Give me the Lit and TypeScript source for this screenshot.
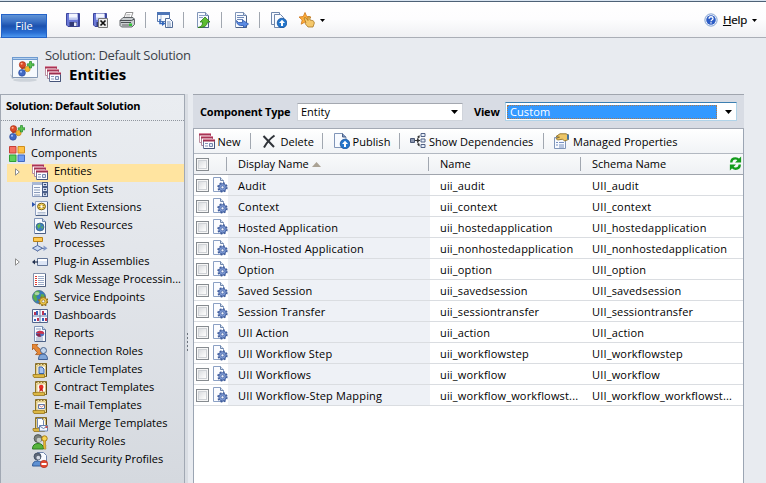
import { LitElement, html, css, svg, nothing } from "lit";
import { customElement, property } from "lit/decorators.js";
import { classMap } from "lit/directives/class-map.js";

const page = svg`<path d="M2.5.5h8l3 3v12h-11z" fill="#f7faff" stroke="#8095b8"/><path d="M10.500.5v3h3" fill="#c9d6ea" stroke="#6f87ad"/><path d="M13.500 4v11.500H3" stroke="#4d6186"/>`;
const stack = svg`
  <path d="M.5.5h11v9H.5z" fill="#fff" stroke="#bd8fa0"/><path d="M0 0h12v1H0z" fill="#d9899f"/><path d="M0 1h12v1.500H0z" fill="#a63555"/>
  <path d="M2.500 3.500h11v9h-11z" fill="#fff" stroke="#b08a9f"/><path d="M2 3h12v1H2z" fill="#d9899f"/><path d="M2 4h12v1.500H2z" fill="#a63555"/>
  <path d="M4.500 6.500h11v9h-11z" fill="#fbfcff" stroke="#6a7799"/><path d="M4 6h12v1H4z" fill="#d9899f"/><path d="M4 7h12v1.500H4z" fill="#9c2f4e"/><path d="M15.500 9v6.500H5" stroke="#465479"/>
  <path d="M6 10h3v1H6zM6 12.500h3v1H6z" fill="#8897b8"/><path d="M10.500 10.500h3v3h-3z" fill="#dfe6f4" stroke="#7587ad"/>`;
const people = svg`
  <path d="M5 5l4 5M8 10l4-4" stroke="#777" stroke-width="1.500"/>
  <circle cx="9.500" cy="8" r="2.700" fill="#f5b62c" stroke="#b37a10" stroke-width=".6"/>
  <circle cx="4.500" cy="3.800" r="3.200" fill="#dc4a25" stroke="#a32c12" stroke-width=".6"/><circle cx="3.600" cy="2.800" r="1" fill="#ffb294"/><path d="M2.500 6.500h4L5.500 8h-2z" fill="#b13a1c"/>
  <circle cx="4" cy="11.800" r="3.400" fill="#4169c4" stroke="#234190" stroke-width=".6"/><circle cx="3" cy="10.800" r="1" fill="#a9c5ff"/>
  <path d="M11.500.5h2v2.300H16v2h-2.500V7h-2V4.800H9.300v-2h2.200z" fill="#5cc54f" stroke="#23862b" stroke-width=".7"/>`;
const floppy = svg`
  <path d="M1.500 1.500h13v13H3L1.500 13z" fill="#6a78d6" stroke="#3c469f"/><path d="M13 2h1v12h-1z" fill="#39449b"/><path d="M4 1.500h8.500v6H4z" fill="#f3f6ff"/>
  <path d="M4 5.500h8.500v2H4z" fill="#c3cdf0"/><path d="M4.500 10h7.500v4.500H4.500z" fill="#323a74"/><path d="M9 10.500h2.500v3.500H9z" fill="#e5eaf8"/>`;
const template = svg`
  <path d="M3.500 1.500h11v13h-11z" fill="#f0dfa2" stroke="#8d7328"/><path d="M14.500 2v12.500" stroke="#5f4c17"/>
  <path d="M4 1h1.500v2H4zM7 1h1.500v2H7zM10 1h1.500v2H10zM13 1h1.500v2H13z" fill="#8a7232"/>
  <path d="M1 12.500h11.500v3H2q-1.500-1.500-1-3z" fill="#dcb743" stroke="#957419" stroke-width=".8"/><path d="M5 4h8.500v8H5z" fill="#fffdf2" stroke="#c7a956" stroke-width=".6"/>`;
const globe = svg`
  <circle cx="7" cy="7" r="6.500" fill="#377bbd" stroke="#416181" stroke-width=".7"/>
  <path d="M3 2q4-2.500 5 .5L6 5 4 6.500 5.500 9 4 12Q.5 9 1 6zM9 4l3 .5.5 4L10 11 8.500 8z" fill="#5aad4c"/><ellipse cx="5" cy="3.500" rx="2.500" ry="1.500" fill="#fff" opacity=".5"/>`;
const gearAt = (x: number, y: number, fill: string, edge: string) => svg`
  <g transform="translate(${x} ${y})"><circle r="4.300" fill="none" stroke=${edge} stroke-width="1.800" stroke-dasharray="1.800 1.577"/>
  <circle r="3.700" fill=${fill} stroke=${edge} stroke-width=".8"/><circle r="1.500" fill="#eef3fc" stroke=${edge} stroke-width=".7"/></g>`;
const upBadge = svg`<circle cx="11" cy="11" r="4.800" fill="#2376cc" stroke="#17509b" stroke-width=".8"/><path d="M11 7.800l3 3.200h-2v3h-2v-3H8z" fill="#fff"/>`;

const icons: Record<string, unknown> = {
  stack, people, save: floppy,
  saveClose: svg`${floppy}<path d="M6.500 6.500h9v9h-9z" fill="#ececec" stroke="#777"/><path d="M8.500 8.500l5 5m0-5l-5 5" stroke="#111" stroke-width="1.700"/>`,
  print: svg`<path d="M5 6l2-5.500h7L12 6z" fill="#fff" stroke="#777" stroke-width=".8"/><path d="M7.500 2.500h4M7 4h4" stroke="#aaa" stroke-width=".7"/>
    <path d="M1 8.500L4 5.500h10l1.500 2v5L13 15H2.500L1 13.500z" fill="#c9cdd0" stroke="#55595e" stroke-width=".9"/><path d="M1 8.500h11.500l3-1.500M2 10.500h10" stroke="#4b4f54" fill="none"/><path d="M3 13h7" stroke="#666"/><path d="M10 11.500h3v2.500h-3z" fill="#30c336"/>`,
  copySheet: svg`<path d="M.5.5h12v9H.5z" fill="#f8fbff" stroke="#5878ac"/><path d="M0 0h13v3H0z" fill="#4d75b7"/><path d="M4 3v6" stroke="#a9bcd9"/>
    <path d="M8.500 6.500h4l3 3v6h-7z" fill="#f5f9ff" stroke="#516b97"/><path d="M10 10h3.500M10 12h4M10 14h4" stroke="#7991b8"/><path d="M3 7v4.500h2.500" fill="none" stroke="#3267bd" stroke-width="1.500"/><path d="M5 9l3.500 2.500L5 14z" fill="#3267bd"/>`,
  exportUp: svg`${page}<path d="M4 3.500h6M4 5.500h4" stroke="#8da1c3"/><path d="M3 15.500q5-1 4.500-5.500H5l5-5 5 5h-2.500Q12 16 3 15.500z" fill="#5dbd31" stroke="#2b7b19" stroke-width=".8"/>`,
  exportRight: svg`${page}<path d="M4 3.500h6M4 5.500h7M4 7.500h6" stroke="#6f89b8"/><path d="M3.500 8.500q1 3 6 2V8l6 4-5 4v-2.500q-7 1-7-5z" fill="#5a8ae2" stroke="#2853a8" stroke-width=".8"/>`,
  publishAll: svg`<path d="M.5.5h8v12h-8z" fill="#f7faff" stroke="#6f87ad"/><path d="M3.500 2.500h6l3 3v10h-9z" fill="#f9fbff" stroke="#6f87ad"/>${upBadge}`,
  publish: svg`<path d="M.5.5h8l3.500 3.500v10.500H.5z" fill="#f7faff" stroke="#8095b8"/><path d="M8.500.5V4H12" fill="#7f98c2" stroke="#4d6186"/>${upBadge}`,
  star: svg`<path d="M6 .5l1.700 4 4.300.5-3.300 3 1 4.200L6 10l-3.800 2.200 1-4.200L0 5l4.300-.5z" fill="#ffae3a" stroke="#cb761b" stroke-width=".8"/>
    <path d="M5 6q1-1 2 0l2 2.500V5q1-1.200 2 0v3l3 .7q1.500.8 1.300 2.500L14 15H9l-3-3.500 1-.8z" fill="#f5c86b" stroke="#a97722" stroke-width=".8"/>`,
  help: svg`<circle cx="8" cy="8" r="7" fill="#fff" stroke="#6c91c9"/><circle cx="8" cy="8" r="5.500" fill="#2c5cc5"/><path d="M5.800 6.500q0-2.200 2.300-2.200 2.200 0 2.200 1.900 0 1.200-1.300 1.800-.9.500-.9 1.400M8 10.500v1.600" fill="none" stroke="#fff" stroke-width="1.500"/>`,
  blocks: svg`<path d="M.5.5h6.500v6.500H.5z" fill="#f47262" stroke="#c93f36"/><path d="M9 .5h6.500v6.500H9z" fill="#ffc246" stroke="#d18e1c"/><path d="M.5 9h6.500v6.500H.5z" fill="#5ed05b" stroke="#2ea035"/><path d="M9 9h6.500v6.500H9z" fill="#6f9df5" stroke="#4069c2"/>`,
  option: svg`<path d="M.5.5h15v14H.5z" fill="#f8fafe" stroke="#8a9abb"/><path d="M0 0h10v3H0z" fill="#a9b8d5"/><path d="M2 5.500h6M2 8h6M2 10.500h6M2 13h6" stroke="#8a9bba"/><path d="M10 0h6v15h-6z" fill="#4a5e89"/><path d="M11 1h4v3h-4zM11 6h4v3h-4zM11 11h4v3h-4z" fill="#d7e2f5"/><path d="M11.500 8h3L13 6.500zM11.500 11.500h3L13 13.500zM11.500 2h3L13 3.500z" fill="#26365c"/>`,
  client: svg`<path d="M3.500 1.500h12v14h-12z" fill="#f6f8fc" stroke="#8fa1c2"/><path d="M15.500 2v13.500H4" stroke="#4d6186"/><path d="M0 2l3.500 2.500L0 7z" fill="#2c55af"/><path d="M5.500 12.500h8M5.500 14h8" stroke="#a2b0c8" stroke-width=".8"/><ellipse cx="9.500" cy="6.500" rx="4" ry="3.300" fill="#f1cf58" stroke="#7d641a"/><path d="M6.500 5l6 3M6.500 8l6-3" stroke="#8b701f" stroke-width=".8"/><circle cx="9.500" cy="6.500" r="1.200" fill="#fff"/>`,
  web: svg`${page}<circle cx="8" cy="9" r="4" fill="#3e80bd" stroke="#355d81" stroke-width=".7"/><path d="M5 7.500L8 5.500 8.500 8 6.500 11zM9 9l2-1-.5 3z" fill="#62b852"/>`,
  process: svg`<path d="M1.500 1.500h9v4h-9z" fill="#ffc94f" stroke="#b98217"/><path d="M5.500 6v4M7 12.500h6M5.500 14v1.500" stroke="#5e7191"/><path d="M5.500 9.500l5 2.700-5 2.700-5-2.700z" fill="#c8d8f3" stroke="#4f69a0"/><path d="M11.500 9.500l4 2.800-4 2.700z" fill="#7f97c9"/>`,
  plugin: svg`<path d="M5.500 4.500h10v7h-10z" fill="#dce5f5" stroke="#637698"/><path d="M6 5h9v2H6z" fill="#fff"/><path d="M1 8h5" stroke="#253350" stroke-width="1.200"/><path d="M0 8l3-2.500v5z" fill="#253350"/>`,
  sdk: svg`<path d="M1.500 1.500h12v13h-12z" fill="#fff" stroke="#8390aa"/><path d="M13.500 2v12.500H2" fill="none" stroke="#53617f"/><path d="M3 4.500h2M3 6.500h2M3 8.500h2M3 10.500h2M3 12.500h2" stroke="#df3b32"/><path d="M6 4.500h6M6 6.500h6M6 8.500h6M6 10.500h6M6 12.500h6" stroke="#9cabc8"/>`,
  service: svg`${globe}${gearAt(11.300, 11.300, "#f0c94b", "#94701a")}`,
  dashboard: svg`<path d="M.5 1.500h15v13H.5z" fill="#f5f8ff" stroke="#53658c"/><path d="M8 2v12M1 8h14" stroke="#6b7fa9"/><path d="M2 4h2v3H2zM10 3h2v4h-2zM5 10h2v3H5zM13 10h2v3h-2z" fill="#ba3453"/><path d="M4 3h2v4H4zM12 5h2v2h-2zM2 11h2v2H2zM10 10h2v3h-2z" fill="#385fb7"/>`,
  report: svg`${page}<path d="M4 3h5M4 12h7M4 14h7" stroke="#8ea0bd"/><ellipse cx="8" cy="7.800" rx="4.200" ry="3" fill="#4c72bf"/><path d="M8 7.800l4.200 0q0-3-5-3l-3.400 2z" fill="#d33247"/><path d="M4 8l4-.2 1 3q-4 .4-5-2.800z" fill="#8a274c"/>`,
  connection: svg`<path d="M0 0h6L4.500 2l4 3.500L11 4l-1 7-6.500-.5 1.800-1.800L1.500 4 0 6z" fill="#e58736" stroke="#97480e" stroke-width=".7"/><circle cx="11.500" cy="6.500" r="3" fill="#c3d6ed" stroke="#4b6792"/><path d="M6.500 15.500q0-5.500 4.500-5.500t4.500 5.500z" fill="#7fa5d8" stroke="#3e5f94"/>`,
  article: svg`${template}<path d="M7 5h3l2 2v4.500H7z" fill="#a6c3f2" stroke="#3663aa"/>`,
  contract: svg`${template}<circle cx="9.200" cy="7" r="2.300" fill="#e52d25"/><path d="M7.800 8.500l-.6 3.500 2-1.500 2 1.500-.7-3.500z" fill="#c51c1c"/>`,
  email: svg`${template}<path d="M6.500 6.500h6v4h-6z" fill="#fff" stroke="#5d7bae"/><path d="M6.500 7l3 2 3-2" fill="none" stroke="#c96757" stroke-width=".8"/>`,
  merge: svg`${template}<path d="M5.500 2.500h4l2 2v7h-6z" fill="#fff" stroke="#7187af"/><path d="M7.500 9.500h8v5.500h-8z" fill="#f5f9ff" stroke="#6883b1"/><path d="M7.500 10l4 2.500 4-2.500" fill="none" stroke="#6883b1"/><path d="M13.500 10h2v2h-2z" fill="#ca514c"/>`,
  security: svg`<circle cx="6" cy="4.500" r="3.900" fill="#7a7f7b" stroke="#444d48" stroke-width=".8"/><circle cx="7" cy="6" r="2.300" fill="#c6cbc8"/><path d="M.5 15q0-5.500 5.500-5.500t5.500 5.500z" fill="#56b33c" stroke="#2c7c22"/><circle cx="12.500" cy="4.500" r="2.700" fill="#f7d554" stroke="#a77b13"/><path d="M11.700 7v7l1.300 1.500 1.200-1.500-1-1 1-1-.8-1V7" fill="#f2c535" stroke="#a77b13" stroke-width=".7"/>`,
  field: svg`<path d="M5.500.5h6l3 3v10h-9z" fill="#f8fbff" stroke="#7086ac"/><circle cx="5.500" cy="4.500" r="3.500" fill="#5e6877" stroke="#37465d" stroke-width=".8"/><circle cx="6.300" cy="5.700" r="1.900" fill="#d5dce6"/><path d="M.5 14q0-5 5-5t5 5z" fill="#5e91d3" stroke="#315b98"/><circle cx="12" cy="12" r="3.700" fill="#e3482f" stroke="#a8261a" stroke-width=".6"/><path d="M9.500 11h5v2h-5z" fill="#fff"/>`,
  del: svg`<path d="M1.500 3l10.500 11M12.500 2.500Q6 7 2 14.500" fill="none" stroke="#2f3339" stroke-width="2"/>`,
  deps: svg`<path d="M.5 5.500h4v4h-4z" fill="#8c98b0" stroke="#4a5876"/><path d="M5 7.500h5M7 7.500l2-4.500M7 7.500l2 5" stroke="#333" fill="none"/><path d="M7.500 5.500L10 7.500 7.500 9.500zM7 4l2.500-2v3zM7 11.500l2.500 2v-3z" fill="#333"/><path d="M11 .5h4v3h-4zM11 6h4v3h-4zM11 11.500h4v3h-4z" fill="#e7eef9" stroke="#516286"/>`,
  props: svg`<path d="M.5 4.500h11v11H.5z" fill="#f7faff" stroke="#8095b8"/><path d="M2 9.500h2M2 12h2M5 9.500h5M5 12h5M5 14h5" stroke="#7790c0"/><path d="M2 3.500L6 .8h6L14.500 2v4.500l-4 1.500-1.800-1.800L3.500 7 2 5.500l3.500-1.300z" fill="#edc667" stroke="#8f7026" stroke-width=".9"/><path d="M13 1.500h2v5h-2z" fill="#47749f"/>`,
  record: svg`<path d="M.5.5h7l3 3v11H.5z" fill="#fbfcff" stroke="#8ba0c4"/><path d="M7.500.5v3h3" fill="#d5dfee" stroke="#6f87ad"/>${gearAt(9.500, 10.300, "#7c98d2", "#3f5c9c")}`,
  refresh: svg`<path d="M3.500 7Q3.500 2.500 8 2.500q2 0 3.500 1.800M12.500 9Q12.500 13.500 8 13.500q-2 0-3.500-1.800" stroke="#139b1b" stroke-width="2.600"/><path d="M14 .5v6.500H7.500zM2 15.500V9h6.500z" fill="#139b1b"/>`,
  window: svg`<ellipse cx="15" cy="24" rx="12" ry="1.800" fill="#cdd3da"/><path d="M0 18l5 4-3 1z" fill="#c0c7d0"/><path d="M2.500 1.500h25v20h-25z" fill="#f6f9fd" stroke="#8598b3"/><path d="M2 1h26v3H2z" fill="#6f9bd0"/><path d="M3 2h24v1H3z" fill="#b4d0ef"/><g transform="translate(8 5)">${people}</g>`,
};

@customElement("crm-icon")
export class CrmIcon extends LitElement {
  @property() name = "";
  @property({ type: Number }) box = 16;
  static styles = css`
    :host { display: block; flex: none; width: 16px; height: 16px; }
    svg { display: block; width: 100%; height: 100%; }
  `;
  render() {
    return html`<svg viewBox="0 0 ${this.box} ${this.box}" fill="none">${icons[this.name] ?? nothing}</svg>`;
  }
}

const nav: [string, string, boolean?][] = [
  ["stack", "Entities", true], ["option", "Option Sets"], ["client", "Client Extensions"], ["web", "Web Resources"],
  ["process", "Processes"], ["plugin", "Plug-in Assemblies", true], ["sdk", "Sdk Message Processin..."],
  ["service", "Service Endpoints"], ["dashboard", "Dashboards"], ["report", "Reports"], ["connection", "Connection Roles"],
  ["article", "Article Templates"], ["contract", "Contract Templates"], ["email", "E-mail Templates"],
  ["merge", "Mail Merge Templates"], ["security", "Security Roles"], ["field", "Field Security Profiles"],
];
const rows: [string, string, string][] = [
  ["Audit", "uii_audit", "UII_audit"],
  ["Context", "uii_context", "UII_context"],
  ["Hosted Application", "uii_hostedapplication", "UII_hostedapplication"],
  ["Non-Hosted Application", "uii_nonhostedapplication", "UII_nonhostedapplication"],
  ["Option", "uii_option", "UII_option"],
  ["Saved Session", "uii_savedsession", "UII_savedsession"],
  ["Session Transfer", "uii_sessiontransfer", "UII_sessiontransfer"],
  ["UII Action", "uii_action", "UII_action"],
  ["UII Workflow Step", "uii_workflowstep", "UII_workflowstep"],
  ["UII Workflows", "uii_workflow", "UII_workflow"],
  ["UII Workflow-Step Mapping", "uii_workflow_workflowst...", "UII_workflow_workflowst..."],
];
const caret = html`<svg class="caret" viewBox="0 0 7 4"><path d="M0 0h7L3.500 4z" fill="currentColor"/></svg>`;

@customElement("app-root")
export class AppRoot extends LitElement {
  static styles = css`
    :host { display: flex; flex-direction: column; height: 483px; overflow: hidden; background: #e8ebf0; color: #000;
      font: 11px/16px "Open Sans", "Noto Sans", sans-serif; white-space: nowrap; }
    * { box-sizing: border-box; }
    .ribbon { flex: none; height: 38px; display: flex; align-items: flex-start; border-top: 1px solid #d9e5f1; border-bottom: 1px solid #aaaeb6;
      background: linear-gradient(#4e6277 1px, #fff 1px, #fdfdfe 50%, #eff0f3); padding-left: 1px; }
    .file { width: 46px; height: 24px; margin-top: 13px; border: 1px solid #2463c8; color: #fff; text-align: center; line-height: 22px;
      background: linear-gradient(#5f93d6, #3a70c4 30%, #1c51ae 50%, #2a6fd4 80%, #4d97ee); }
    .tools { display: flex; align-items: center; height: 20px; margin: 9px 0 0 18px; }
    .tools crm-icon { margin-right: 10px; }
    .tools .wide { margin-right: 11px; }
    .tools .wider { margin-right: 12px; }
    .sep { width: 1px; height: 16px; background: #a1a7b0; flex: none; }
    .tools .sep { margin-right: 11px; }
    .caret { width: 7px; height: 4px; display: block; flex: none; }
    .tools .caret, .help .caret { width: 5px; height: 3px; }
    .tools .caret { margin-left: -5px; }
    .help { margin: 9px 9px 0 auto; display: flex; align-items: center; height: 20px; }
    .help crm-icon { width: 14px; height: 14px; }
    .help span { margin: 0 5px; font-size: 11.5px; letter-spacing: -.2px; -webkit-text-stroke: .2px #000; }
    .head { flex: none; height: 56px; display: flex; padding: 9px 0 0 10px; }
    .head .big { width: 28px; height: 28px; margin-top: 9px; }
    .titles { margin-left: 7px; }
    .crumb { font-size: 13px; line-height: 18px; color: #3b4148; letter-spacing: -.33px; margin: -1px 0 1px; }
    .title { display: flex; align-items: center; gap: 8px; font-size: 15px; font-weight: 700; line-height: 20px; height: 18px; letter-spacing: .05px; }
    .body { flex: 1; display: flex; min-height: 0; }
    .nav { width: 185px; flex: none; border: 1px solid #a1a8b3; border-bottom: 0;
      background: linear-gradient(#eaedf1, #e2e5ea 45%, #d5d9df); }
    .navtitle { height: 26px; line-height: 22px; padding-left: 5px; font-weight: 700; letter-spacing: -.26px; border-bottom: 1px dotted #8f959e; }
    .item { display: flex; align-items: center; height: 18px; }
    .top { height: 20px; padding-left: 8px; gap: 6px; }
    .top span { padding-bottom: 2px; }
    .top.first { margin-top: 1px; height: 22px; }
    .leaf { margin-left: 6px; padding: 0 0 2px 8px; gap: 6px; }
    .leaf span { padding-bottom: 2px; }
    .leaf.on { background: #ffe4a0; }
    .exp { width: 5px; height: 8px; margin-right: 6px; flex: none; display: block; }
    .exp.none { visibility: hidden; }
    .grip { flex: none; width: 8px; display: flex; justify-content: flex-start; padding: 239px 0 0 2px; background: linear-gradient(90deg, #d9dde3 3px, #e8ebf0 3px); }
    .grip i { display: block; width: 1px; height: 18px; background: repeating-linear-gradient(#6d747e 0 2px, transparent 2px 4px); }
    .main { flex: none; width: 551px; display: flex; flex-direction: column; border-top: 1px solid #a0a5ae; background: #fff; border-left: 1px solid #9ba5b3; border-right: 1px solid #9ba5b3; }
    .filter { flex: none; height: 34px; margin: 0 -1px; display: flex; align-items: center; background: #d8dce4; border-bottom: 1px solid #a3a9b4; padding-left: 7px; font-weight: 700; letter-spacing: -.2px; }
    .select { height: 18px; display: flex; align-items: center; justify-content: space-between; background: #fff; font-weight: 400; letter-spacing: 0; border: 1px solid #d0d4db; border-top-color: #a4a8b0; padding-right: 4px; }
    .ctype { width: 97px; } .view { width: 31px; margin-left: 11px; }
    .select.a { width: 166px; padding-left: 3px; }
    .select.b { width: 232px; height: 19px; padding: 0 4px 0 1px; border-color: #3c7fb1 #b0d3e8 #b0d3e8; }
    .hl { width: 210px; height: 14px; line-height: 12px; padding-left: 2px; background: #3399ff; color: #fff; border: 1px dotted #a8794f; letter-spacing: .1px; }
    .bar { flex: none; height: 25px; display: flex; align-items: center; border-bottom: 1px solid #b2b8c1; background: linear-gradient(#fff, #f1f3f6); padding-left: 5px; }
    .cmd { display: flex; align-items: center; gap: 2.500px; flex: none; letter-spacing: .04px; }
    .cmd span { padding-top: 2px; }
    .bar .sep { margin-right: 11px; }
    .w1 { width: 51px; } .w2 { width: 60px; } .w3 { width: 65px; }
    .w4 { width: 133px; margin-left: -1px; gap: 3px; } .w5 { margin-left: -1px; gap: 3px; }
    .grid { display: grid; grid-template-columns: 34px 202px 152px 1fr; height: 21px; flex: none; border-bottom: 1px solid #dadde1; }
    .cell { display: flex; align-items: center; padding: 2px 0 0 10px; overflow: hidden; line-height: 18px; letter-spacing: .17px; }
    .grid .cell.sel { padding: 0 0 0 2px; gap: 4px; }
    .name { background: #eef1f6; }
    .hdr { background: linear-gradient(#f9fafb, #eff1f4); border-bottom-color: #a0a5ad; }
    .hdr .cell { padding-top: 0; letter-spacing: 0; }
    .hdr .name { background: none; gap: 3px; }
    .hdr .sep { height: 14px; margin: 0 11px 0 -12px; }
    .hdr .sel { justify-content: space-between; }
    .hdr .sel .sep { margin: 0 1px 0 0; }
    .hdr .cell.gap { overflow: visible; }
    .sort { width: 9px; height: 5px; }
    .fresh { margin: 0 0 2px auto; width: 15px; height: 15px; }
    .check { width: 13px; height: 13px; flex: none; border: 1px solid #868b90; background: linear-gradient(135deg, #d0d3d7, #fbfbfb 75%); box-shadow: inset 0 0 0 1px #f6f6f6, inset 0 0 0 2px #cfd2d6; }
  `;

  private command(icon: string, label: string, cls: string) {
    return html`<div class="cmd ${cls}"><crm-icon name=${icon}></crm-icon><span>${label}</span></div>`;
  }

  render() {
    return html`
      <div class="ribbon">
        <div class="file">File</div>
        <div class="tools">
          <crm-icon class="wide" name="save"></crm-icon><crm-icon class="wide" name="saveClose"></crm-icon><crm-icon name="print"></crm-icon><div class="sep"></div>
          <crm-icon name="copySheet"></crm-icon><div class="sep"></div>
          <crm-icon name="exportUp"></crm-icon><div class="sep"></div>
          <crm-icon name="exportRight"></crm-icon><div class="sep"></div>
          <crm-icon class="wider" name="publishAll"></crm-icon><crm-icon name="star"></crm-icon>${caret}
        </div>
        <div class="help"><crm-icon name="help"></crm-icon><span><u>H</u>elp</span>${caret}</div>
      </div>
      <div class="head">
        <crm-icon class="big" name="window" box="28"></crm-icon>
        <div class="titles">
          <div class="crumb">Solution: Default Solution</div>
          <div class="title"><crm-icon name="stack"></crm-icon>Entities</div>
        </div>
      </div>
      <div class="body">
        <div class="nav">
          <div class="navtitle">Solution: Default Solution</div>
          <div class="item top first"><crm-icon name="people"></crm-icon><span>Information</span></div>
          <div class="item top"><crm-icon name="blocks"></crm-icon><span>Components</span></div>
          ${nav.map(([icon, label, exp], i) => html`
            <div class=${classMap({ item: true, leaf: true, on: i === 0 })}>
              <svg class=${classMap({ exp: true, none: !exp })} viewBox="0 0 5 8"><path d="M.5.8v6.400L4.300 4z" fill="#fff" stroke="#8d8d8d"/></svg>
              <crm-icon name=${icon}></crm-icon><span>${label}</span>
            </div>`)}
        </div>
        <div class="grip"><i></i></div>
        <div class="main">
          <div class="filter">
            <span class="ctype">Component Type</span>
            <div class="select a"><span>Entity</span>${caret}</div>
            <span class="view">View</span>
            <div class="select b"><div class="hl">Custom</div>${caret}</div>
          </div>
          <div class="bar">
            ${this.command("stack", "New", "w1")}<div class="sep"></div>
            ${this.command("del", "Delete", "w2")}<div class="sep"></div>
            ${this.command("publish", "Publish", "w3")}<div class="sep"></div>
            ${this.command("deps", "Show Dependencies", "w4")}<div class="sep"></div>
            ${this.command("props", "Managed Properties", "w5")}
          </div>
          <div class="grid hdr">
            <div class="cell sel"><div class="check"></div><div class="sep"></div></div>
            <div class="cell name">Display Name<svg class="sort" viewBox="0 0 9 5"><path d="M0 5h9L4.500 0z" fill="#aaa294"/></svg></div>
            <div class="cell gap"><div class="sep"></div>Name</div>
            <div class="cell gap"><div class="sep"></div>Schema Name<crm-icon class="fresh" name="refresh"></crm-icon></div>
          </div>
          ${rows.map(([a, b, c]) => html`
            <div class="grid">
              <div class="cell sel"><div class="check"></div><crm-icon name="record"></crm-icon></div>
              <div class="cell name">${a}</div><div class="cell">${b}</div><div class="cell">${c}</div>
            </div>`)}
        </div>
      </div>`;
  }
}
